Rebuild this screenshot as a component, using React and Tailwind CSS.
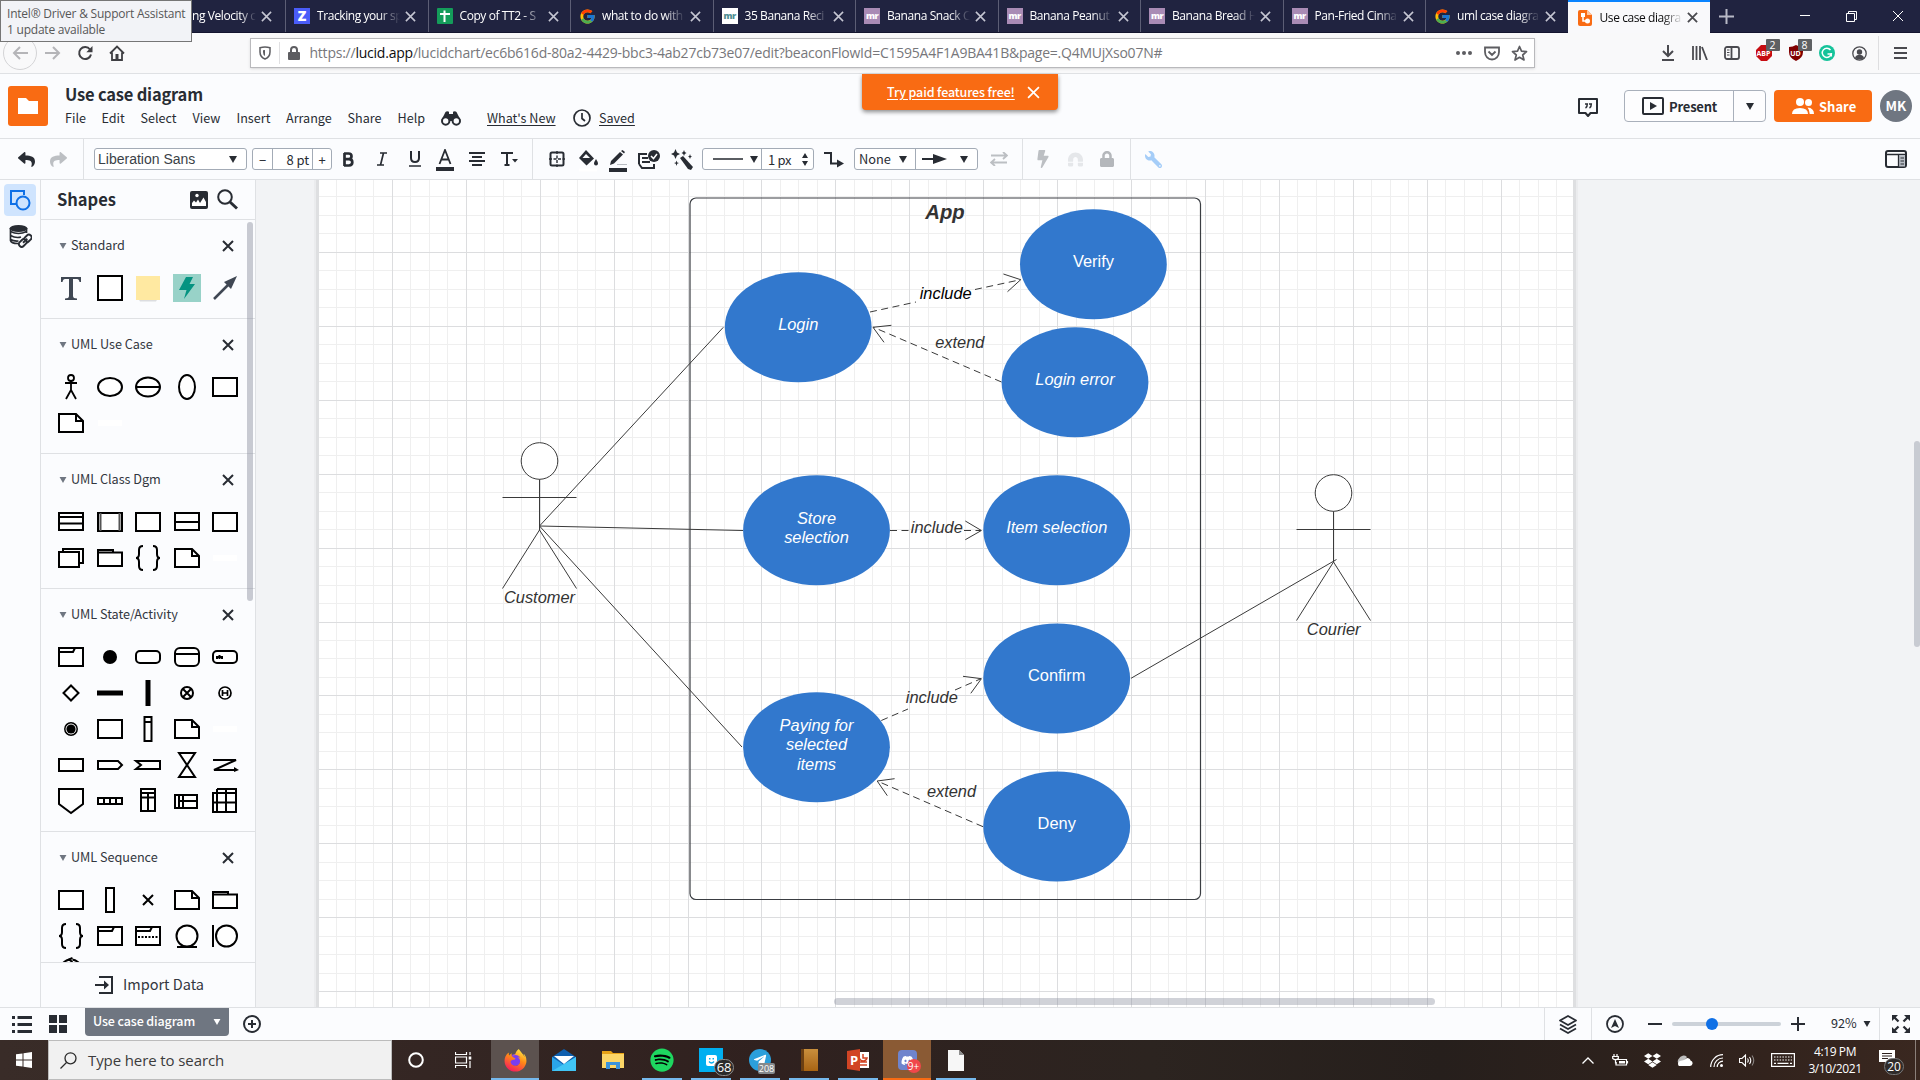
import React from "react";
import {
  FaBolt, FaMagnet, FaLock, FaWrench, FaSpotify,
  FaTelegramPlane, FaDropbox, FaFirefoxBrowser, FaDiscord, FaShare,
} from "react-icons/fa";
import { FcGoogle } from "react-icons/fc";

const INK = "#282c33";

function Svg({ w, h, vb, className = "", children, ...rest }) {
  return (
    <svg width={w} height={h} viewBox={vb || `0 0 ${w} ${h}`} fill="none" className={`shrink-0 ${className}`} {...rest}>
      {children}
    </svg>
  );
}

const Cross = ({ size, color, sw = 2, className }) => (
  <Svg w={size} h={size} vb="0 0 12 12" className={className} stroke={color} strokeWidth={sw}>
    <path d="M1 1 11 11M11 1 1 11" />
  </Svg>
);

const Caret = ({ w = 8, h = 7, color = INK, className }) => (
  <Svg w={w} h={h} vb="0 0 8 7" className={className}>
    <path d="M0 0H8L4 7Z" fill={color} />
  </Svg>
);

/* ---------- browser ---------- */

const Mr = ({ light }) => (
  <span className={`flex h-4 w-4 shrink-0 items-center justify-center pb-[2px] font-['Open_Sans'] text-[9px] leading-none font-extrabold tracking-[-0.5px] ${light ? "bg-white text-[#4f8f94]" : "bg-[#a98bb5] text-white"}`}>
    mr
  </span>
);

const favicons = {
  z: <span className="flex h-4 w-4 shrink-0 items-center justify-center bg-[#4a5df9] font-['Open_Sans'] text-[14px] leading-none font-extrabold text-white">Z</span>,
  sheets: (
    <Svg w={16} h={16}>
      <rect width="16" height="16" rx="1" fill="#149c5a" />
      <path d="M7.500 2.500V14M3 6H13" stroke="#fff" strokeWidth="2" />
    </Svg>
  ),
  google: <FcGoogle size={17} className="shrink-0" />,
  mrLight: <Mr light />,
  mr: <Mr />,
  lucid: (
    <Svg w={14} h={16}>
      <path d="M2 0H9L14 5V14Q14 16 12 16H2Q0 16 0 14V2Q0 0 2 0Z" fill="#f96b13" />
      <path d="M9 0V5H14Z" fill="#ffc59e" />
      <path d="M5 5V11H9" stroke="#fff" strokeWidth="1.500" />
      <rect x="3" y="3" width="4" height="4" fill="#fff" />
      <circle cx="9.500" cy="11" r="2.500" fill="#fff" />
    </Svg>
  ),
};

const tabs = [
  ["z", "Tracking your sp"],
  ["sheets", "Copy of TT2 - S"],
  ["google", "what to do with"],
  ["mrLight", "35 Banana Reci"],
  ["mr", "Banana Snack C"],
  ["mr", "Banana Peanut"],
  ["mr", "Banana Bread H"],
  ["mr", "Pan-Fried Cinna"],
  ["google", "uml case diagra"],
];

const tabText = "ml-[7px] w-[83px] whitespace-nowrap text-[12px] leading-[16px] tracking-[-0.42px] [mask-image:linear-gradient(to_right,#000_75%,transparent)]";

function TabBar() {
  return (
    <div className="flex h-[33px] shrink-0 border-b border-[#14152f] bg-[#202340] font-['Open_Sans',sans-serif] text-white">
      <div className="flex w-[285px] shrink-0 items-center pl-[192px]">
        <span className="w-[64px] text-[12px] leading-[16px] tracking-[-0.42px] whitespace-nowrap [mask-image:linear-gradient(to_right,#000_75%,transparent)]">ng Velocity c</span>
        <Cross size={11} color="#c5c6d2" sw={1.700} className="ml-[5px]" />
      </div>
      {tabs.map(([icon, label], i) => (
        <div key={i} className="flex w-[142.500px] shrink-0 items-center border-l border-[#5c5e75] pl-[8px]">
          <span className="flex w-4 justify-center">{favicons[icon]}</span>
          <span className={tabText}>{label}</span>
          <Cross size={11} color="#c5c6d2" sw={1.700} className="ml-[5px]" />
        </div>
      ))}
      <div className="flex h-[33px] w-[142px] shrink-0 items-center border-t-2 border-[#0a84ff] bg-[#f9f9fb] pl-[9px] text-[#0c0c0d]">
        <span className="flex w-4 justify-center">{favicons.lucid}</span>
        <span className={tabText}>Use case diagra</span>
        <Cross size={11} color="#4a4a4f" sw={2} className="ml-[4px]" />
      </div>
      <Svg w={15} h={15} className="mt-[9px] ml-[9px]" stroke="#b8b9c6" strokeWidth="2">
        <path d="M7.500 0V15M0 7.500H15" />
      </Svg>
      <Svg w={10} h={10} className="mt-[11px] ml-[66px]" stroke="#fff">
        <path d="M0 4.500H10" />
      </Svg>
      <Svg w={11} h={11} className="mt-[11px] ml-[36px]" stroke="#fff">
        <path d="M.5 2.500H8.500V10.500H.5ZM2.500 2.500V.5H10.500V8.500H8.500" />
      </Svg>
      <Cross size={12} color="#fff" sw={1} className="mt-[10px] ml-[35px]" />
    </div>
  );
}

function NavBar() {
  return (
    <div className="flex h-10 shrink-0 items-center bg-[#f9f9fa] font-['Open_Sans',sans-serif]">
      <div className="ml-[3px] flex h-[34px] w-[34px] shrink-0 items-center justify-center rounded-full border border-[#d4d4d6]">
        <Svg w={16} h={14} stroke="#b5b5b8" strokeWidth="2"><path d="M8 1 2 7 8 13M2 7H16" /></Svg>
      </div>
      <Svg w={16} h={14} className="ml-[8px]" stroke="#b5b5b8" strokeWidth="2"><path d="M8 1 14 7 8 13M14 7H0" /></Svg>
      <Svg w={16} h={16} className="ml-[16px]" stroke="#3f3f43" strokeWidth="2">
        <path d="M13 4.500A6 6 0 1 0 14 9.500" /><path d="M15.500 1V7.200H9.300Z" fill="#3f3f43" stroke="none" />
      </Svg>
      <Svg w={16} h={16} className="ml-[16px]" stroke="#3f3f43" strokeWidth="1.800">
        <path d="M1 8.500 8 1.500 15 8.500M3 7.500V15H13V7.500" /><path d="M8 9V15" strokeWidth="3" />
      </Svg>
      <div className="ml-[124.500px] flex h-[30px] w-[1285px] shrink-0 items-center border border-[#b9b9bc] bg-white shadow-sm">
        <Svg w={12} h={14} className="ml-[8px]" stroke="#5d5d61" strokeWidth="1.500">
          <path d="M1 1.700Q6 .4 11 1.700V6Q11 11 6 13Q1 11 1 6Z" /><path d="M6 4V10Q4 9 4 6V4.300Z" fill="#5d5d61" stroke="none" />
        </Svg>
        <div className="ml-[8px] h-[22px] w-px bg-[#e0e0e2]" />
        <Svg w={12} h={14} className="ml-[8px]">
          <rect y="6" width="12" height="8" rx="1" fill="#5d5d61" /><path d="M3 7V4A3 3 0 0 1 9 4V7" stroke="#5d5d61" strokeWidth="2" />
        </Svg>
        <span className="ml-[10px] w-[1146px] text-[14px] leading-[20px] tracking-[-0.23px] whitespace-nowrap text-[#77777b]">
          https://<span className="text-[#0c0c0d]">lucid.app</span>/lucidchart/ec6b616d-80a2-4429-bbc3-4ab27cb73e07/edit?beaconFlowId=C1595A4F1A9BA41B&amp;page=.Q4MUjXso07N#
        </span>
        <Svg w={16} h={4}><g fill="#5d5d61"><circle cx="2" cy="2" r="2" /><circle cx="8" cy="2" r="2" /><circle cx="14" cy="2" r="2" /></g></Svg>
        <Svg w={16} h={15} className="ml-[12px]" stroke="#5d5d61" strokeWidth="1.800">
          <path d="M1 1.500H15V6A7 7.500 0 0 1 1 6ZM4.500 5.500 8 9 11.500 5.500" />
        </Svg>
        <Svg w={17} h={17} className="ml-[11px]" stroke="#5d5d61" strokeWidth="1.700">
          <path d="M8.500 1.500 10.500 6.200 15.500 6.600 11.700 10 13 15 8.500 12.300 4 15 5.300 10 1.500 6.600 6.500 6.200Z" strokeLinejoin="round" />
        </Svg>
      </div>
      <Svg w={14} h={16} className="ml-[126px]" stroke="#4a4a4f" strokeWidth="2"><path d="M7 0V11M2 6 7 11 12 6M1 15H13" /></Svg>
      <Svg w={16} h={14} className="ml-[17px]" stroke="#4a4a4f" strokeWidth="1.800"><path d="M1 0V14M4.500 0V14M8 0V14M10 1 15 14" /></Svg>
      <Svg w={16} h={14} className="ml-[16px]" stroke="#4a4a4f" strokeWidth="1.800">
        <rect x="1" y="1" width="14" height="12" rx="2" /><path d="M7.500 1V13" /><path d="M3 4H5.500M3 6.500H5.500M3 9H5.500" strokeWidth="1" />
      </Svg>
      <div className="relative ml-[16px] h-4 w-4 shrink-0">
        <Svg w={16} h={16}><path d="M5 0H11L16 5V11L11 16H5L0 11V5Z" fill="#c70d12" /></Svg>
        <span className="absolute inset-0 flex items-center justify-center text-[7px] font-bold text-white">ABP</span>
        <span className="absolute -top-[6px] left-[10px] flex h-[12px] w-[14px] items-center justify-center rounded-[1px] bg-[#5e6063] text-[10.500px] leading-none text-white">2</span>
      </div>
      <div className="relative ml-[16px] h-4 w-4 shrink-0">
        <Svg w={16} h={16}><path d="M8 0Q11 2 15 2V7Q15 13 8 16Q1 13 1 7V2Q5 2 8 0Z" fill="#800000" /></Svg>
        <span className="absolute inset-0 flex items-center justify-center text-[7px] font-bold text-white">UD</span>
        <span className="absolute -top-[6px] left-[10px] flex h-[12px] w-[14px] items-center justify-center rounded-[1px] bg-[#5e6063] text-[10.500px] leading-none text-white">8</span>
      </div>
      <Svg w={16} h={16} className="ml-[15px]">
        <circle cx="8" cy="8" r="8" fill="#15c39a" /><path d="M11.500 5A4.600 4.600 0 1 0 12.300 9H8.500M12.300 8V11.500" stroke="#fff" strokeWidth="1.500" />
      </Svg>
      <Svg w={15} h={15} className="ml-[17px]" stroke="#4a4a4f" strokeWidth="1.300">
        <circle cx="7.500" cy="7.500" r="6.700" /><circle cx="7.500" cy="6" r="2.700" fill="#4a4a4f" stroke="none" /><path d="M3 12Q4 8.700 7.500 8.700T12 12Q10 13.500 7.500 13.500T3 12Z" fill="#4a4a4f" stroke="none" />
      </Svg>
      <div className="ml-[11px] h-[34px] w-px bg-[#dedee0]" />
      <Svg w={13} h={12} className="ml-[15px]" stroke="#4a4a4f" strokeWidth="2"><path d="M0 1H13M0 6H13M0 11H13" /></Svg>
    </div>
  );
}

/* ---------- lucidchart header ---------- */

const menus = [
  ["File", "w-[36.500px]"], ["Edit", "w-[39px]"], ["Select", "w-[52px]"], ["View", "w-[44px]"],
  ["Insert", "w-[49.500px]"], ["Arrange", "w-[61.500px]"], ["Share", "w-[50px]"], ["Help", "w-[43.500px]"],
];

function Header() {
  return (
    <div className="relative flex h-[65px] shrink-0 border-t border-[#dfe1e4] bg-[#fbfcfe]">
      <div className="mt-[12px] ml-2 flex h-10 w-10 shrink-0 items-center justify-center rounded-[3px] bg-[#f96b13]">
        <Svg w={20} h={16}><path d="M0 0H8L11 3H20V16H0Z" fill="#fff" /></Svg>
      </div>
      <div className="ml-[17px] flex w-[1513px] shrink-0 flex-col">
        <div className="mt-[8px] flex h-6 items-center text-[16.500px] font-bold tracking-[-0.2px] text-[#282c33]">Use case diagram</div>
        <div className="mt-[1px] flex h-[22px] items-center text-[12.600px]">
          {menus.map(([m, w]) => (
            <span key={m} className={`${w} shrink-0`}>{m}</span>
          ))}
          <Svg w={20} h={15}>
            <path d="M4.500 1Q6 -.5 8 .8V3H12V.8Q14 -.5 15.500 1L19.500 9H.5Z" fill={INK} />
            <path d="M8 3H12V10H8Z" fill={INK} />
            <g fill="#fbfcfe" stroke={INK} strokeWidth="2"><circle cx="4.700" cy="10" r="3.700" /><circle cx="15.300" cy="10" r="3.700" /></g>
          </Svg>
          <span className="ml-[26px] w-[86px] shrink-0 whitespace-nowrap underline underline-offset-2">What's New</span>
          <Svg w={18} h={18} stroke={INK} strokeWidth="1.700"><circle cx="9" cy="9" r="8" /><path d="M9 4V9.500L12 12" /></Svg>
          <span className="ml-[8px] underline underline-offset-2">Saved</span>
        </div>
      </div>
      <Svg w={20} h={19} className="mt-[24px]" stroke={INK} strokeWidth="2">
        <path d="M1 1H19V15H12.500L10 18 7.500 15H1Z" strokeLinejoin="round" />
        <path d="M7 6H9.300Q9.300 9 7.500 10M11 6H13.300Q13.300 9 11.500 10" strokeWidth="1.500" />
      </Svg>
      <div className="mt-4 ml-[26px] flex h-8 w-[142px] shrink-0 rounded-[4px] border border-[#a9b0bb] bg-[#fdfdfe]">
        <div className="flex w-[109px] items-center border-r border-[#a9b0bb] pl-[17px]">
          <Svg w={22} h={18} stroke={INK} strokeWidth="2"><rect x="1" y="1" width="20" height="16" rx="1" /><path d="M8 5 15 9 8 13Z" fill={INK} stroke="none" /></Svg>
          <span className="ml-[5px] text-[13px] font-bold tracking-[-0.2px]">Present</span>
        </div>
        <div className="flex flex-1 items-center justify-center"><Caret w={8} h={7} /></div>
      </div>
      <div className="mt-4 ml-2 flex h-8 w-[98px] shrink-0 items-center rounded-[4px] bg-[#f96b13] pl-[18px]">
        <Svg w={22} h={17}>
          <g fill="#fff"><circle cx="8" cy="4" r="4" /><path d="M0 16Q0 10 8 10T16 16Z" /><circle cx="16.500" cy="4.500" r="3.500" /><path d="M15.500 9.500Q22 10 22 16H17.700Q17.700 12 15.500 9.500Z" /></g>
        </Svg>
        <span className="ml-[5px] text-[13px] font-bold text-white">Share</span>
      </div>
      <div className="mt-4 ml-2 flex h-8 w-8 shrink-0 items-center justify-center rounded-full bg-[#6f7681] text-[13.500px] font-bold text-white">MK</div>
      <div className="absolute top-0 left-[862px] flex h-[36px] w-[196px] items-center rounded-b-[4px] bg-[#f96b13] pl-[25px] text-white shadow-[0_2px_4px_rgba(0,0,0,0.45)]">
        <span className="w-[140px] text-[12.500px] font-medium tracking-[-0.12px] whitespace-nowrap underline underline-offset-2">Try paid features free!</span>
        <Cross size={13} color="#fff" sw={1.600} />
      </div>
    </div>
  );
}

const VRule = ({ className }) => <div className={`h-full w-px shrink-0 bg-[#dfe1e4] ${className}`} />;

function Toolbar() {
  return (
    <div className="flex h-[41px] shrink-0 items-center border-t border-[#dfe1e4] bg-[#fbfcfe]">
      <FaShare size={17} color={INK} className="ml-[18px] shrink-0 -scale-x-100" />
      <FaShare size={17} color="#bcbfc3" className="ml-[15px] shrink-0" />
      <VRule className="ml-[16px]" />
      <div className="ml-[10px] flex h-[22px] w-[153px] shrink-0 items-center justify-between rounded-[3px] border border-[#a3abb6] bg-white pr-[9px] pl-[3px] font-['Liberation_Sans'] text-[14px] text-[#3a3f47]">
        Liberation Sans <Caret w={8} h={7} />
      </div>
      <div className="ml-[5px] flex h-[22px] w-[80px] shrink-0 items-center rounded-[3px] border border-[#a3abb6] bg-white text-[13px]">
        <span className="flex h-full w-[20px] items-center justify-center border-r border-[#a3abb6]">−</span>
        <span className="flex w-[39px] justify-end pr-[3px] text-[13px] tracking-[-0.1px] whitespace-nowrap">8 pt</span>
        <span className="flex h-full w-[19px] items-center justify-center border-l border-[#a3abb6]">+</span>
      </div>
      <Svg w={12} h={15} className="ml-[10px]" stroke={INK} strokeWidth="2.700"><path d="M2 1.500H6.500Q9.500 1.500 9.500 4.300T6.500 7.200H2H7Q10.300 7.200 10.300 10.300T7 13.500H2M2.500 1V14" /></Svg>
      <Svg w={10} h={14} className="ml-[23px]" stroke={INK} strokeWidth="1.700"><path d="M3 1H10M0 13H7M6.500 1 3.500 13" /></Svg>
      <Svg w={12} h={16} className="ml-[22px]" stroke={INK} strokeWidth="2"><path d="M2 0V7Q2 11 6 11T10 7V0" /><path d="M0 15H12" strokeWidth="1.500" /></Svg>
      <Svg w={18} h={22} className="mt-[2px] ml-[15px]" stroke={INK} strokeWidth="1.800"><path d="M3.500 15 9 1 14.500 15M5.500 10.500H12.500" /><path d="M0 20H18" strokeWidth="4" /></Svg>
      <Svg w={16} h={14} className="ml-[15px]" stroke={INK} strokeWidth="2"><path d="M0 1H16M3 5H13M0 9H16M3 13H13" /></Svg>
      <Svg w={17} h={14} className="ml-[16px]" stroke={INK} strokeWidth="2"><path d="M0 1H12M6 1V14M3.500 13H8.500" /><path d="M11 7H17L14 10.500Z" fill={INK} stroke="none" /></Svg>
      <VRule className="ml-[14px]" />
      <Svg w={16} h={16} className="ml-[16px]" stroke={INK} strokeWidth="2">
        <rect x="1.500" y="1.500" width="13" height="13" rx="1.500" /><path d="M8 0V16M0 8H16" strokeWidth="1.400" strokeDasharray="3 1.500" />
      </Svg>
      <Svg w={19} h={22} className="mt-[4px] ml-[14px]">
        <path d="M7 0 15 8.500 7.500 15.500 0 8Z" fill={INK} /><path d="M7 4 11 8H3.500Z" fill="#fbfcfe" /><path d="M17 9Q19 12 19 13.500A2 2 0 0 1 15 13.500Q15 12 17 9Z" fill={INK} /><path d="M0 20H18" stroke="#fff" strokeWidth="3" />
      </Svg>
      <Svg w={18} h={22} className="mt-[4px] ml-[11px]">
        <path d="M2 11 11 2 14 4.500 5 13.500 1 15Z" fill={INK} /><path d="M12 1 13.500 0 16 2 15 3.500Z" fill={INK} /><path d="M8 14.500H18" stroke="#b8bcc2" /><path d="M0 20H18" stroke={INK} strokeWidth="4" />
      </Svg>
      <Svg w={22} h={19} className="ml-[11px]" stroke={INK} strokeWidth="2">
        <path d="M9 4H1V14M1 14 4 18H16V14M4 8H10M4 12H12" /><circle cx="16" cy="6" r="6" fill={INK} stroke="none" /><path d="M13 6 15.500 8.500 19 4" stroke="#fff" strokeWidth="1.500" />
      </Svg>
      <Svg w={22} h={21} className="ml-[11px]">
        <path d="M9 9 12 7 22 18 20 21 17 20Z" fill={INK} />
        <path d="M4.500 0 6 3.500 9 5 6 6.500 4.500 10 3 6.500 0 5 3 3.500ZM13 1 13.800 3 15.500 4 13.800 5 13 7 12.200 5 10.500 4 12.200 3ZM19 5 19.700 7 21 7.500 19.700 8.200 19 10 18.300 8.200 17 7.500 18.300 7ZM5.500 11.500 6.200 13.500 8 14 6.200 14.800 5.500 17 4.800 14.800 3 14 4.800 13.500Z" fill={INK} />
      </Svg>
      <div className="ml-[9px] flex h-[22px] w-[112px] shrink-0 items-center rounded-[3px] border border-[#a3abb6] bg-white">
        <div className="flex h-full w-[59px] items-center border-r border-[#a3abb6] pl-[10px]">
          <div className="h-[2px] w-[30px] bg-[#5a5d62]" />
          <Caret w={8} h={7} className="ml-[7px]" />
        </div>
        <span className="ml-[6px] w-[34px] text-[13px] tracking-[-0.3px] whitespace-nowrap">1 px</span>
        <Svg w={6} h={13}><path d="M0 5 3 0 6 5ZM0 8 3 13 6 8Z" fill={INK} /></Svg>
      </div>
      <Svg w={20} h={17} className="ml-[10px]" stroke={INK} strokeWidth="2"><path d="M0 2H7V12.500H14" /><path d="M13 8.500 20 12.500 13 16.500Z" fill={INK} stroke="none" /></Svg>
      <div className="ml-[10px] flex h-[22px] w-[124px] shrink-0 items-center rounded-[3px] border border-[#a3abb6] bg-white">
        <div className="flex h-full w-[61px] items-center border-r border-[#a3abb6] pl-[4px]">
          <span className="w-[40px] text-[12.800px]">None</span>
          <Caret w={8} h={7} />
        </div>
        <Svg w={26} h={10} className="ml-[6px]"><path d="M0 5H12" stroke={INK} strokeWidth="2" /><path d="M11 0 25 5 11 10Z" fill={INK} /></Svg>
        <Caret w={8} h={7} className="ml-[12px]" />
      </div>
      <Svg w={18} h={14} className="ml-[12px]" stroke="#bcbfc3" strokeWidth="1.800"><path d="M1 3.500H17M13 0 17 3.500 13 7M17 10.500H1M5 7 1 10.500 5 14" /></Svg>
      <VRule className="ml-[14px]" />
      <FaBolt size={18} color="#bcbfc3" className="ml-[11px] shrink-0" />
      <FaMagnet size={15} color="#e5e7ea" className="ml-[16px] shrink-0 rotate-180" />
      <FaLock size={16} color="#b4b7bb" className="ml-[16px] shrink-0" />
      <VRule className="ml-[15px]" />
      <FaWrench size={17} color="#a5cdf8" className="ml-[14px] shrink-0 -scale-x-100" />
      <Svg w={22} h={18} className="mr-[13px] ml-auto" stroke={INK} strokeWidth="2">
        <rect x="1" y="1" width="20" height="16" rx="2" /><path d="M1 4.500H21" strokeWidth="1.500" /><rect x="14" y="5" width="6" height="11.500" fill="#b9bec6" stroke="none" /><path d="M13.500 5V17" strokeWidth="1.300" /><path d="M15.500 8H19M15.500 11H19M15.500 14H19" strokeWidth="1.200" />
      </Svg>
    </div>
  );
}

/* ---------- shapes panel ---------- */

const R = (p) => <rect x={-12} y={-9} width={24} height={18} {...p} />;
const folder = "M-12 9V-9H12V9ZM-12 -5H2L4 -9";
const tabFolder = "M-12 -6V8H12V-5.500H3V-8H-12V-5.500H3";
const brace = "M-5 -12Q-9 -12 -9 -8V-4Q-9 0 -12 0Q-9 0 -9 4V8Q-9 12 -5 12M5 -12Q9 -12 9 -8V-4Q9 0 12 0Q9 0 9 4V8Q9 12 5 12";
const S = {
  text: <path d="M-10 -6V-11H10V-6H8.500Q8 -9 6 -9H2V8Q2 10.500 6 10.500V12H-6V10.500Q-2 10.500 -2 8V-9H-6Q-8 -9 -8.500 -6Z" fill="#3f4753" stroke="none" />,
  square: <rect x="-12" y="-12" width="24" height="24" />,
  sticky: <g stroke="none"><path d="M-10 10H10L8 13.500H-8Z" fill="#dcdde0" /><rect x="-12" y="-12" width="24" height="24" fill="#ffe9a1" /></g>,
  bolt: <g stroke="none"><rect x="-14" y="-14" width="28" height="28" fill="#98d2c8" /><path d="M-1 -11H6L2.500 -4H8L-3 11L-.5 2H-8Z" fill="#059381" /></g>,
  arrow: <g stroke="#3f4753"><path d="M-11 11 5 -5" strokeWidth="2.500" /><path d="M12 -12 6 1 -1 -6Z" fill="#3f4753" stroke="none" /></g>,
  actor: <g strokeWidth="1.800"><circle cy="-9" r="3" /><path d="M0 -6V3M-6 -4H6M0 3 -5 12M0 3 5 12" fill="none" /></g>,
  ellipse: <ellipse rx="12" ry="9" />,
  ellipseLine: <g><ellipse rx="12" ry="9.500" /><path d="M-12 0H12" /></g>,
  tall: <ellipse rx="8" ry="12" />,
  rect: <R />,
  note: <path d="M-12 -9H5L12 -2V9H-12ZM5 -9V-2H12" />,
  faint: <path d="M-12 0H12" stroke="#fff" strokeWidth="6" />,
  class3: <g><R y={-9} height={17} /><path d="M-12 -5H12M-12 1.500H12" /></g>,
  sides: <g><R /><path d="M-9.500 -9V9M9.500 -9V9" stroke="#555" /></g>,
  half: <g><R y={-9} height={17} /><path d="M-12 0H12" /></g>,
  multi: <g><rect x="-8" y="-9" width="20" height="14" /><rect x="-12" y="-6" width="20" height="15" /></g>,
  tabFolder: <path d={tabFolder} />,
  brace: <path d={brace} fill="none" />,
  frame: <path d={folder} />,
  dot: <circle r="7" fill="#000" stroke="none" />,
  round: <rect x="-12" y="-6" width="24" height="12" rx="4" />,
  roundTall: <g><rect x="-12" y="-9" width="24" height="18" rx="5" /><path d="M-12 -3H12" /></g>,
  roundSub: <g><rect x="-12" y="-6" width="24" height="12" rx="4" /><path d="M-8 2V0H-3V2M-5.500 -2V2" /></g>,
  diamond: <path d="M0 -7.500 7.500 0 0 7.500 -7.500 0Z" />,
  hbar: <path d="M-13 0H13" strokeWidth="5" />,
  vbar: <path d="M0 -13V13" strokeWidth="5" />,
  xcircle: <g><circle r="6" /><path d="M-4 -4 4 4M4 -4-4 4" /></g>,
  hcircle: <g strokeWidth="1.700"><circle r="6" /><path d="M-2.500 -3V3M2.500 -3V3M-2 0H2" /></g>,
  bull: <g><circle r="6.200" strokeWidth="1.500" /><circle r="4.600" fill="#000" stroke="none" /></g>,
  pillar: <g><rect x="-3.500" y="-12" width="7" height="24" /><path d="M-3.500 -7H3.500" /></g>,
  flat: <rect x="-12" y="-6" width="24" height="12" />,
  send: <path d="M-12 -4H8L12 0 8 4H-12Z" />,
  receive: <path d="M-12 -4H12V4H-12L-7 0Z" />,
  hourglass: <path d="M-8 -12H8L-8 12H8Z" />,
  zig: <g><path d="M-12 -5H11L-11 5H11" fill="none" /><path d="M9 2 14 5 9 7Z" fill="#000" stroke="none" /></g>,
  shield: <path d="M-12 -12H12V3L0 12 -12 3Z" />,
  strip: <path d="M-12 -3H12V3H-12ZM-6 -3V3M0 -3V3M6 -3V3" />,
  vlane: <path d="M-7 -12H7V10H-7ZM-7 -8H7M-7 -3.500H7M0 -8V10" />,
  hlane: <path d="M-12 -6H10V7H-12ZM-8 -6V7M-4 -6V7M-8 0H10" />,
  grid: <path d="M-8 -12H11V11H-12V-8H11M-12 1.500H11M-8 -12V11M1 -12V11" />,
  life: <rect x="-4" y="-12" width="8" height="24" />,
  x: <path d="M-5 -5 5 5M5 -5-5 5" />,
  frameDots: <g><path d={folder} /><path d="M-10 1H11" strokeDasharray="2 1.500" /></g>,
  entity: <g><circle r="10.500" /><path d="M-10 11H10" /></g>,
  boundary: <g><circle cx="1.500" r="10.500" /><path d="M-12 -11V11" /></g>,
  control: <g><circle r="10.500" cy="-2" /><path d="M1.500 -14-2 -12.500 1.500 -10" /></g>,
};

const sections = [
  ["Standard", ["text", "square", "sticky", "bolt", "arrow"]],
  ["UML Use Case", ["actor", "ellipse", "ellipseLine", "tall", "rect", "note", "faint"]],
  ["UML Class Dgm", ["class3", "sides", "rect", "half", "rect", "multi", "tabFolder", "brace", "note", "faint"]],
  ["UML State/Activity", [
    "frame", "dot", "round", "roundTall", "roundSub", "diamond", "hbar", "vbar", "xcircle", "hcircle",
    "bull", "rect", "pillar", "note", "faint", "flat", "send", "receive", "hourglass", "zig",
    "shield", "strip", "vlane", "hlane", "grid",
  ]],
  ["UML Sequence", ["rect", "life", "x", "note", "tabFolder", "brace", "frame", "frameDots", "entity", "boundary", "control"]],
];

function Sidebar() {
  return (
    <>
      <div className="flex w-[40px] shrink-0 flex-col items-center pt-1">
        <div className="flex h-8 w-8 items-center justify-center rounded-[4px] bg-[#cfe4fe]">
          <Svg w={22} h={22} stroke="#0f70e6" strokeWidth="2"><path d="M7 15H2V2H15V6" /><circle cx="14" cy="14" r="6.500" /></Svg>
        </div>
        <Svg w={23} h={23} className="mt-[9px]" stroke={INK}>
          <ellipse cx="9.500" cy="3.500" rx="9" ry="3.500" fill={INK} stroke="none" />
          <path d="M1.500 3V15.500Q2 18.500 9 18.500M17.500 3V8M1.500 6.500Q9.500 10.500 17.500 6.500M1.500 10.500Q7 13.500 12 12M1.500 14.500Q5 16.500 9.500 16" strokeWidth="1.700" />
          <g strokeWidth="1.900">
            <rect x="14.500" y="10.800" width="8.500" height="5.500" rx="2.700" transform="rotate(-45 18.700 13.500)" fill="#fbfcfe" />
            <rect x="9.500" y="15.300" width="8.500" height="5.500" rx="2.700" transform="rotate(-45 13.700 18)" fill="#fbfcfe" />
            <path d="M14 17.800 18.300 13.700" />
          </g>
        </Svg>
      </div>
      <div className="relative flex w-[216px] shrink-0 flex-col border-x border-[#dfe1e4]">
        <div className="flex h-[40px] shrink-0 items-center border-b border-[#dfe1e4] pl-[16px]">
          <span className="w-[133px] text-[16.500px] font-bold">Shapes</span>
          <Svg w={18} h={18}><rect width="18" height="18" rx="2" fill={INK} /><path d="M2 15V12L4 9.500 6 11.500 8 8.500 10 12 13.500 6.500 16 11V15Z" fill="#fff" /><circle cx="7" cy="4.500" r="1.700" fill="#fff" /></Svg>
          <Svg w={21} h={21} className="ml-[9px]" stroke={INK} strokeWidth="2"><circle cx="8" cy="8" r="6.800" /><path d="M13 13 20 19.500" strokeWidth="3" /></Svg>
        </div>
        <div className="min-h-0 flex-1 overflow-hidden">
          {sections.map(([title, shapes]) => (
            <div key={title} className="border-b border-[#dfe1e4] pb-3">
              <div className="flex h-[50px] items-center pt-[2px] pl-[18px]">
                <Caret w={8} h={6} color="#6f7681" />
                <span className="ml-[4px] w-[151px] pb-[2px] text-[12.700px] tracking-[-0.05px] whitespace-nowrap text-[#333740]">{title}</span>
                <Cross size={12} color={INK} sw={2} />
              </div>
              <div className="grid auto-rows-[36px] grid-cols-[repeat(5,38.500px)] items-center justify-items-center pl-[11px]">
                {shapes.map((s, i) => (
                  <Svg key={i} w={28} h={28} vb="-14 -14 28 28" className="overflow-visible" stroke="#000" strokeWidth="2">
                    <g fill="#fff">{S[s]}</g>
                  </Svg>
                ))}
              </div>
            </div>
          ))}
        </div>
        <div className="flex h-[45px] shrink-0 items-center border-t border-[#dfe1e4] pl-[54px]">
          <Svg w={18} h={18} stroke={INK} strokeWidth="2"><path d="M4 1H17V17H4M0 9H11" /><path d="M9 4.500 14 9 9 13.500Z" fill={INK} stroke="none" /></Svg>
          <span className="ml-[10px] pb-[1px] text-[14.500px] whitespace-nowrap text-[#333740]">Import Data</span>
        </div>
        <div className="absolute top-[42px] right-[2px] h-[379px] w-[6px] rounded-full bg-[#8a8f9e]/45" />
      </div>
    </>
  );
}

/* ---------- canvas ---------- */

const useCases = [
  [1093.400, 264.300, ["Verify"], false],
  [798.200, 327.200, ["Login"], true],
  [1075, 382.200, ["Login error"], true],
  [816.500, 530.200, ["Store", "selection"], true],
  [1056.700, 530.200, ["Item selection"], true],
  [1056.700, 678.500, ["Confirm"], false],
  [816.500, 747.300, ["Paying for", "selected", "items"], true],
  [1056.700, 826.500, ["Deny"], false],
];
const labels = [
  [945.700, 299, "include", "#000"], [959.800, 348, "extend"], [936.800, 533, "include"],
  [931.800, 703, "include"], [951.500, 797, "extend"], [539.500, 603, "Customer"], [1333.700, 635, "Courier"],
];
const dashes = [
  "M870 312 916 302", "M975 289.500 1020.500 279.700", "M1001.500 382 873.500 327.300", "M890 530.500H909", "M964 530.500H981",
  "M881.300 720.500 908 709", "M955 690 981 678.700", "M983 826.700 877.200 781",
];
const heads = [
  "M1003.400 274 1020.700 279.700 1007.500 291.700", "M891.400 325.300 873 327.300 884 342.300", "M965.300 521 981.400 530.500 965.300 539.700",
  "M963 676.300 981.400 678.700 970.800 693.300", "M894.600 778.700 877.200 781 887.300 795.700",
];
const links = ["M539.500 526 723.300 327.300", "M539.500 526 743 530.500", "M539.500 526 742 747", "M1336.500 559.500 1131 678.300"];

const Actor = ({ x, y }) => (
  <g fill="none">
    <circle cx={x} cy={y} r="18.300" fill="#fff" />
    <path d={`M${x} ${y + 18.3}V${y + 69}M${x - 37} ${y + 36.5}H${x + 37}M${x - 37} ${y + 127.5}L${x} ${y + 69}L${x + 37} ${y + 127.5}`} />
  </g>
);

function gridLines(major) {
  const out = [];
  const step = 18.48;
  for (let i = 1; i < 68; i++) {
    const x = Math.floor(318.4 + i * step);
    if ((i % 4 === 0) === major && x < 1573) out.push(`M${x + 0.5} 180V1007`);
  }
  for (let i = 1; i < 45; i++) {
    const y = Math.floor(178.5 + i * step);
    if ((i % 4 === 0) === major && y < 1007) out.push(`M319 ${y + 0.5}H1573`);
  }
  return out.join("");
}

function Canvas() {
  return (
    <div className="relative h-[827px] w-[1664px] shrink-0 bg-[#f2f3f5]">
      <svg width="1664" height="827" viewBox="256 180 1664 827" className="block font-['Liberation_Sans']">
        <rect x="314" y="180" width="1264" height="827" fill="#ebecee" />
        <rect x="316" y="180" width="1260" height="827" fill="#dedfe1" />
        <rect x="319" y="180" width="1254" height="827" fill="#fff" />
        <path d={gridLines(false)} stroke="#efefef" />
        <path d={gridLines(true)} stroke="#dcdddf" />
        <rect x="690" y="198" width="510.500" height="701.500" rx="6" stroke="#3a3d42" strokeWidth="1.200" fill="none" />
        <g stroke="#3a3a3a" strokeWidth="1">
          {links.map((d) => <path key={d} d={d} />)}
          <Actor x={539.5} y={461} />
          <Actor x={1333.5} y={493} />
          {dashes.map((d) => <path key={d} d={d} strokeDasharray="7 4.500" />)}
          {heads.map((d) => <path key={d} d={d} fill="none" />)}
        </g>
        <text x="945" y="219" textAnchor="middle" fontSize="20.300" fontWeight="bold" fontStyle="italic" fill="#333">App</text>
        {useCases.map(([x, y, lines, italic]) => (
          <g key={lines[0]}>
            <ellipse cx={x} cy={y} rx="73.400" ry="55" fill="#3278cd" />
            {lines.map((t, i) => (
              <text key={t} x={x} y={y + (italic ? 3.1 : 2.5) + (i - (lines.length - 1) / 2) * 19.4} textAnchor="middle" fontSize="16.400" fontStyle={italic ? "italic" : "normal"} fill="#fff">{t}</text>
            ))}
          </g>
        ))}
        {labels.map(([x, y, t, c]) => (
          <text key={`${x}${t}`} x={x} y={y} textAnchor="middle" fontSize="16.400" fontStyle="italic" fill={c || "#333"}>{t}</text>
        ))}
      </svg>
      <div className="absolute bottom-[2px] left-[578px] h-[7px] w-[601px] rounded-full bg-[#8a8f9e]/40" />
      <div className="absolute top-[261px] right-[0px] h-[206px] w-[6px] rounded-full bg-[#8a8f9e]/40" />
    </div>
  );
}

function BottomBar() {
  return (
    <div className="flex h-[33px] shrink-0 items-center border-t border-[#dfe1e4] bg-[#fbfcfe]">
      <Svg w={20} h={17} className="ml-[12px]" stroke={INK} strokeWidth="3"><path d="M0 1.500H3M5.500 1.500H20M0 8.500H3M5.500 8.500H20M0 15.500H3M5.500 15.500H20" /></Svg>
      <Svg w={18} h={18} className="ml-[17px]"><path d="M0 0H8V8H0ZM10 0H18V8H10ZM0 10H8V18H0ZM10 10H18V18H10Z" fill={INK} /></Svg>
      <div className="ml-[18px] flex h-[28px] w-[144px] shrink-0 items-center self-start rounded-b-[4px] bg-[#6f7681] pl-[8px] text-[12.500px] font-medium text-white">
        <span className="w-[120px] pb-[1px] tracking-[-0.12px] whitespace-nowrap">Use case diagram</span>
        <Caret w={8} h={6} color="#fff" />
      </div>
      <Svg w={18} h={18} className="ml-[14px]" stroke={INK} strokeWidth="2"><circle cx="9" cy="9" r="8" /><path d="M9 5V13M5 9H13" /></Svg>
      <VRule className="ml-auto" />
      <Svg w={18} h={19} className="ml-[14px]" stroke={INK} strokeWidth="1.800">
        <path d="M9 1 17 5.500 9 10 1 5.500ZM1 9.500 9 14 17 9.500M1 13.500 9 18 17 13.500" strokeLinejoin="round" />
      </Svg>
      <VRule className="ml-[14px]" />
      <Svg w={18} h={18} className="ml-[14px]" stroke={INK} strokeWidth="1.800"><circle cx="9" cy="9" r="8" /><path d="M9 4 13 13 9 11 5 13Z" fill={INK} stroke="none" /></Svg>
      <div className="ml-[24px] h-[2px] w-[14px] shrink-0 bg-[#282c33]" />
      <div className="ml-[10px] flex h-[4px] w-[109px] shrink-0 items-center rounded-full bg-[#ccd2d9] pl-[34px]">
        <div className="h-3 w-3 rounded-full bg-[#0f70e6]" />
      </div>
      <Svg w={14} h={14} className="ml-[10px]" stroke={INK} strokeWidth="2"><path d="M7 0V14M0 7H14" /></Svg>
      <span className="ml-[26px] w-[32px] pb-[1px] text-[12.700px] whitespace-nowrap">92%</span>
      <Caret w={8} h={6} />
      <VRule className="ml-[8px]" />
      <Svg w={18} h={18} className="mr-[10px] ml-[12px]" stroke={INK} strokeWidth="2">
        <path d="M2 2 6.500 6.500M16 2 11.500 6.500M2 16 6.500 11.500M16 16 11.500 11.500" strokeWidth="2.300" />
        <path d="M0 0H6L0 6ZM18 0V6L12 0ZM0 18V12L6 18ZM18 18H12L18 12Z" fill={INK} stroke="none" />
      </Svg>
    </div>
  );
}

/* ---------- windows taskbar ---------- */

const apps = [
  { n: "firefox", bg: "bg-[#5c524f]", line: "w-full bg-[#76b9ed]", icon: (
    <>
      <svg width="0" height="0" className="absolute"><defs><linearGradient id="fx" x1=".8" y1="0" x2=".3" y2="1"><stop offset="0" stopColor="#fff04a" /><stop offset=".45" stopColor="#ff8a16" /><stop offset="1" stopColor="#f5195f" /></linearGradient></defs></svg>
      <span className="absolute h-3 w-3 rounded-full bg-[#7a3df0]" /><FaFirefoxBrowser size={23} fill="url(#fx)" className="relative" />
    </>
  ) },
  { n: "mail", icon: (
    <Svg w={24} h={22}><path d="M0 8 12 0 24 8V22H0Z" fill="#0f5fae" /><path d="M0 8 12 16 24 8V22H0Z" fill="#2aa5ea" /><path d="M0 22 24 8V22Z" fill="#41c5f5" /><path d="M2 7H22L12 15Z" fill="#fff" /></Svg>
  ) },
  { n: "explorer", icon: (
    <Svg w={22} h={18}><path d="M0 0H9L11 2H22V17H0Z" fill="#e8a317" /><rect y="3" width="22" height="14" fill="#fcd667" /><path d="M4 18V11H18V18H14V14H8V18Z" fill="#3a93dc" /></Svg>
  ) },
  { n: "spotify", line: "w-10 bg-[#76b9ed]", icon: <span className="flex h-[22px] w-[22px] items-center justify-center rounded-full bg-black"><FaSpotify size={24} color="#1ed760" className="shrink-0" /></span> },
  { n: "groupme", line: "w-10 bg-[#76b9ed]", icon: (
    <span className="relative flex h-6 w-6 items-center justify-center bg-[#00aff0]">
      <Svg w={11} h={11}><rect width="11" height="11" rx="2" fill="#fff" /><path d="M3 3H4.500V4.500H3ZM6.500 3H8V4.500H6.500Z" fill="#00aff0" /><path d="M3 6.500Q5.500 9.500 8 6.500" stroke="#00aff0" strokeWidth="1.300" /></Svg>
      <span className="absolute top-[11px] left-[15px] flex h-[17px] w-[20px] items-center justify-center rounded-full border border-[#8c8c8c] bg-[#2b2b2b] text-[13px] leading-none tracking-[-0.3px] text-white">68</span>
    </span>
  ) },
  { n: "telegram", line: "w-10 bg-[#76b9ed]", icon: (
    <span className="relative flex h-[22px] w-[22px] items-center justify-center rounded-full bg-[#2b9fdb]">
      <FaTelegramPlane size={14} color="#fff" />
      <span className="absolute top-[14px] left-[9px] flex h-[11px] w-[17px] items-center justify-center rounded-[2px] bg-[#85898c] text-[9px] leading-none text-white">208</span>
    </span>
  ) },
  { n: "book", line: "w-10 bg-[#76b9ed]", icon: <span className="h-[22px] w-[17px] border-l-[3px] border-[#6b3f12] bg-gradient-to-b from-[#c98f3c] to-[#a86412]" /> },
  { n: "powerpoint", line: "w-10 bg-[#76b9ed]", icon: (
    <span className="relative flex h-[22px] w-[22px] items-center">
      <Svg w={22} h={22}><rect x="10" y="3" width="12" height="16" fill="#fff" /><path d="M16 5V9H20A4 4 0 0 1 12.500 9.500M13 13H20M13 16H20" stroke="#d14424" strokeWidth="1.500" /><path d="M0 2 13 0V22L0 20Z" fill="#d14424" /></Svg>
      <span className="absolute left-[3px] text-[13px] leading-none font-bold text-white">P</span>
    </span>
  ) },
  { n: "discord", bg: "bg-[#8a5a34]", line: "w-full bg-[#f96b13]", icon: (
    <span className="relative flex h-[20px] w-[19px] items-center justify-center rounded-[4px] bg-[#6f84cd]">
      <FaDiscord size={13} color="#fff" />
      <span className="absolute top-[9px] left-[9px] flex h-[14px] w-[14px] items-center justify-center rounded-full bg-[#f0474a] text-[10px] leading-none text-white">9+</span>
    </span>
  ) },
  { n: "notepad", line: "w-10 bg-[#76b9ed]", icon: <Svg w={16} h={21}><path d="M0 0H11L16 5V21H0Z" fill="#f7f7f7" /><path d="M11 0V5H16Z" fill="#8d8d8d" /></Svg> },
];

function Taskbar() {
  return (
    <div className="flex h-10 shrink-0 items-center bg-[linear-gradient(90deg,#392c28_0%,#30211f_40%,#2c2420_60%,#261f1c_75%,#32231d_92%,#3a2820_100%)] font-['Open_Sans',sans-serif] text-white">
      <div className="flex h-full w-12 shrink-0 items-center justify-center">
        <Svg w={16} h={16}><path d="M0 2.300 6.500 1.400V7.500H0ZM7.500 1.200 16 0V7.500H7.500ZM0 8.500H6.500V14.600L0 13.700ZM7.500 8.500H16V16L7.500 14.800Z" fill="#fff" /></Svg>
      </div>
      <div className="flex h-full w-[344px] shrink-0 items-center border border-[#bcbcbc] bg-[#f1f1f1]">
        <Svg w={17} h={17} className="ml-[11px]" stroke="#2b2b2b" strokeWidth="1.300"><circle cx="10.500" cy="6.300" r="5.500" /><path d="M6.500 10.500 .5 16.500" /></Svg>
        <span className="ml-[11px] text-[15px] tracking-[-0.1px] whitespace-nowrap text-[#3c3c3c]">Type here to search</span>
      </div>
      <Svg w={16} h={16} className="ml-[16px]" stroke="#fff" strokeWidth="2"><circle cx="8" cy="8" r="6.800" /></Svg>
      <Svg w={17} h={16} className="ml-[31px]" stroke="#fff" strokeWidth="1.200">
        <path d="M.5 0V2.500H11.500V0M.5 5H11.500V11H.5ZM.5 16V13.500H11.500V16M15 0V3M15 9V16" /><rect x="13.700" y="4.500" width="2.600" height="3" fill="#fff" stroke="none" />
      </Svg>
      <div className="ml-[19px] flex h-full gap-px">
        {apps.map((a) => (
          <div key={a.n} className={`relative flex h-full w-12 shrink-0 items-center justify-center ${a.bg || ""}`}>
            {a.icon}
            {a.line && <div className={`absolute bottom-0 h-[2px] ${a.line}`} />}
          </div>
        ))}
      </div>
      <Svg w={12} h={7} className="ml-auto" stroke="#fff" strokeWidth="1.300"><path d="M.5 6.500 6 1 11.500 6.500" /></Svg>
      <Svg w={17} h={12} className="ml-[18px]" stroke="#fff" strokeWidth="1.200"><path d="M4 5.500H14.500V11H4V8M2 0V2M5 0V2M.7 2.500H6.300V4.500Q3.500 7 .7 4.500ZM3.500 6V9H5M15.500 7V9.500" /><path d="M7 7H13V9.500H7Z" fill="#fff" stroke="none" /></Svg>
      <FaDropbox size={17} className="ml-[15px] shrink-0" />
      <Svg w={17} h={11} className="ml-[15px]"><path d="M4 10A4 4 0 0 1 3 3.500 5 5 0 0 1 11 2L8 6Z" fill="#bdbdbd" /><path d="M3 11A3 3 0 0 1 4 6Q8 6 11 3 14 3 14.500 5.500A2.800 2.800 0 0 1 14 11Z" fill="#fff" /></Svg>
      <Svg w={13} h={13} className="ml-[17px]" stroke="#fff" strokeWidth="1.200"><path d="M.7 13A12.300 12.300 0 0 1 13 .7M4 13A9 9 0 0 1 13 4M7.200 13A5.800 5.800 0 0 1 13 7.200" /><circle cx="11.500" cy="11.500" r="1.500" fill="#fff" stroke="none" /></Svg>
      <Svg w={16} h={13} className="ml-[16px]" stroke="#fff" strokeWidth="1.100"><path d="M.5 4.500H3L6.500 1V12L3 8.500H.5ZM8.500 4.500Q10 6.500 8.500 8.500M10.500 3Q13 6.500 10.500 10" /><path d="M13 1.500Q16.500 6.500 13 11.500" stroke="#8a8583" /></Svg>
      <Svg w={24} h={14} className="ml-[16px]" stroke="#fff" strokeWidth="1.200"><rect x=".6" y=".6" width="22.800" height="12.800" /><path d="M3 4H21M3 7H21" strokeDasharray="1.500 1.300" /><path d="M3 10.300H5M6.500 10.300H17.500M19 10.300H21" /></Svg>
      <div className="ml-[14px] flex w-[52px] shrink-0 flex-col items-center text-[12px] leading-[17px] tracking-[-0.4px] whitespace-nowrap">
        <span>4:19 PM</span>
        <span>3/10/2021</span>
      </div>
      <div className="relative mr-[10px] ml-[18px] h-[16px] w-[16px] shrink-0">
        <Svg w={16} h={16} className="-mt-[2px]"><path d="M0 0H16V12H10L6 16V12H0Z" fill="#fff" /><path d="M3 3.500H13M3 6H13M3 8.500H9" stroke="#2c211d" /></Svg>
        <span className="absolute top-[6px] left-[5px] flex h-[17px] w-[20px] items-center justify-center rounded-full border border-[#777] bg-[#2f2b2a] text-[12px] leading-none">20</span>
      </div>
      <div className="mr-[4px] ml-[10px] h-full w-px shrink-0 bg-[#8b807a]" />
    </div>
  );
}

export default function App() {
  return (
    <div className="relative flex h-[1080px] w-[1920px] flex-col overflow-hidden bg-[#fbfcfe] font-['Noto_Sans_CJK_SC',sans-serif] leading-none text-[#282c33]">
      <TabBar />
      <NavBar />
      <Header />
      <Toolbar />
      <div className="flex h-[828px] shrink-0 border-t border-[#dfe1e4]">
        <Sidebar />
        <Canvas />
      </div>
      <BottomBar />
      <Taskbar />
      <div className="absolute top-0 left-0 flex h-[42px] w-[192px] flex-col justify-center border border-[#767676] bg-[#f2f3f7] pt-[2px] pl-[6px] font-['Open_Sans',sans-serif] text-[12px] leading-[16px] tracking-[-0.22px] whitespace-nowrap text-[#575757]">
        <span>Intel® Driver &amp; Support Assistant</span>
        <span>1 update available</span>
      </div>
    </div>
  );
}
